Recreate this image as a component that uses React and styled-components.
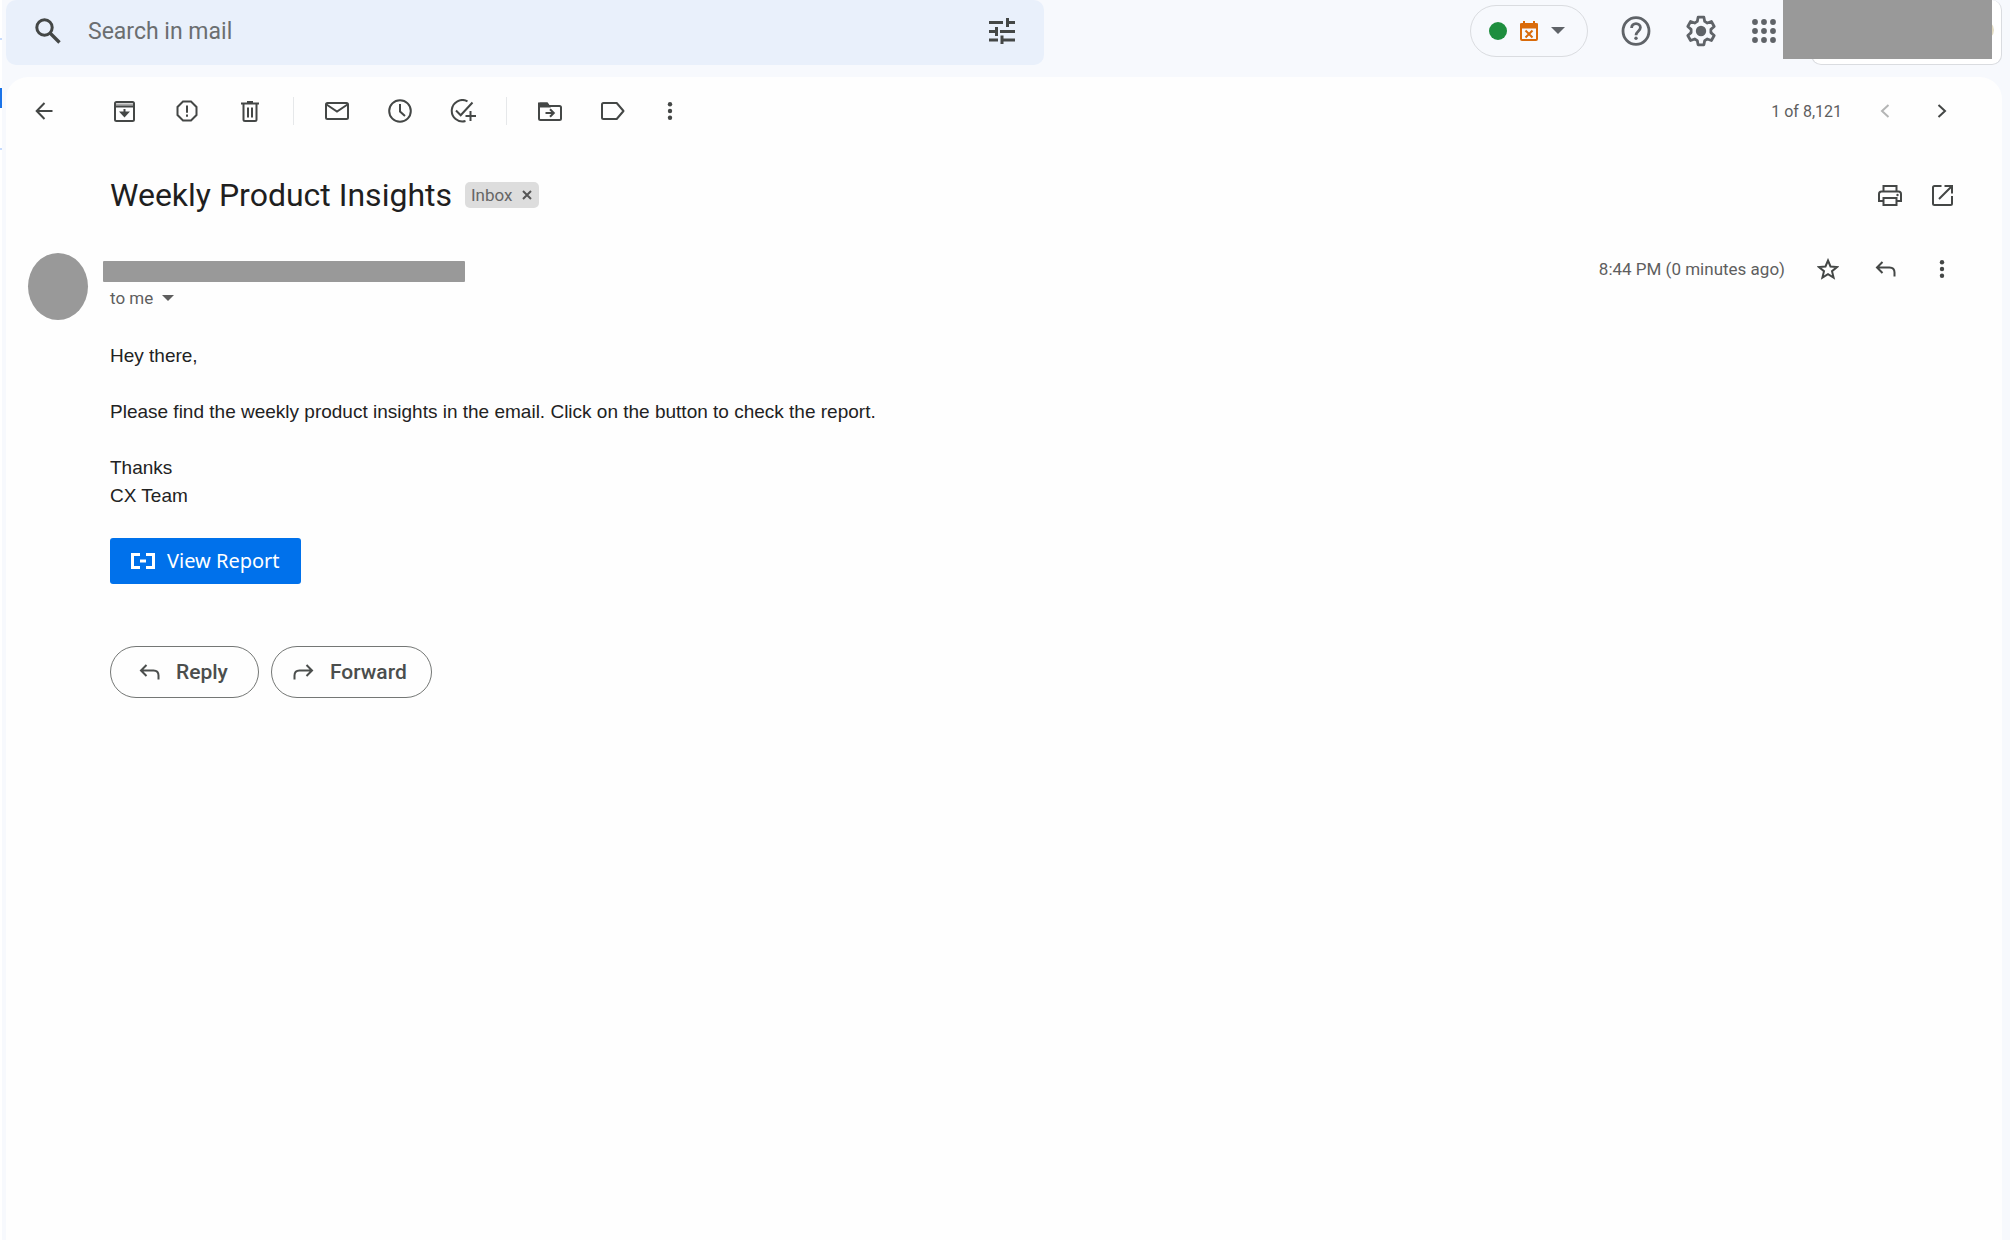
import React from 'react';
import styled, { createGlobalStyle } from 'styled-components';

const GlobalStyle = createGlobalStyle`
  * { box-sizing: border-box; }
  body { margin: 0; background: #f7f9fd; color: #444746; font-family: Roboto, "Liberation Sans", sans-serif; }
  button, input { font: inherit; color: inherit; }
  svg { display: block; flex: none; }
`;

const Shell = styled.div`
  display: flex;
  min-height: 100vh;
`;
const Rail = styled.div`
  flex: 0 0 2px;
  display: flex;
  flex-direction: column;
  background: #fff;
`;
const RailMark = styled.span`
  height: ${(p) => p.$size}px;
  margin-top: ${(p) => p.$space}px;
  background: ${(p) => (p.$strong ? '#1a73e8' : '#c6dafc')};
`;
const Main = styled.div`
  flex: 1;
  min-width: 0;
  display: flex;
  flex-direction: column;
  padding: 0 8px 0 4px;
`;
const Header = styled.header`
  display: flex;
  align-items: flex-start;
  justify-content: space-between;
  height: 77px;
`;
const SearchBar = styled.form`
  flex: 0 1 1038px;
  display: flex;
  align-items: center;
  height: 65px;
  padding: 0 20px 4px;
  border-radius: 10px;
  background: #e9f0fb;
`;
const SearchInput = styled.input`
  flex: 1;
  min-width: 0;
  height: 40px;
  margin-left: 18px;
  padding: 2px 0 0;
  border: 0;
  outline: 0;
  background: transparent;
  font-size: 23px;
  &::placeholder { color: #6b6e70; opacity: 1; }
`;
const IconButton = styled.button`
  flex: none;
  display: flex;
  align-items: center;
  justify-content: center;
  width: ${(p) => p.$width || 44}px;
  height: 44px;
  padding: 0;
  border: 0;
  border-radius: 22px;
  background: transparent;
  color: ${(p) => p.$tone || '#444746'};
  cursor: pointer;
`;
const HeaderTools = styled.div`
  display: flex;
  align-items: center;
  gap: 23px;
  height: 61px;
`;
const StatusButton = styled.button`
  display: flex;
  align-items: center;
  gap: 13px;
  height: 52px;
  padding: 0 22px 0 18px;
  margin-right: 4px;
  border: 1px solid #dadce0;
  border-radius: 26px;
  background: transparent;
  color: #5f6368;
`;
const StatusDot = styled.span`
  width: 18px;
  height: 18px;
  border-radius: 50%;
  background: #1e8e3e;
`;
const Account = styled.div`
  position: relative;
  align-self: flex-start;
  width: 219px;
  height: 65px;
  margin-left: -23px;
  padding-left: 28px;
`;
const AccountCard = styled.div`
  display: flex;
  justify-content: flex-end;
  align-items: center;
  height: 65px;
  padding: 0 7px 4px;
  border: 1px solid #dadce0;
  border-top: 0;
  border-radius: 10px;
  background: #fff;
`;
const AccountPhoto = styled.span`
  width: 20px;
  height: 20px;
  border-radius: 50%;
  background: #e3dcc3;
`;
const AccountMask = styled.div`
  position: absolute;
  top: 0;
  left: 0;
  width: 209px;
  height: 59px;
  background: #999;
`;
const Panel = styled.main`
  flex: 1;
  border-radius: 22px 22px 0 0;
  background: #fefefe;
`;
const Toolbar = styled.div`
  display: flex;
  align-items: center;
  height: 68px;
  padding: 0 38px 0 16px;
`;
const ToolGroup = styled.div`
  display: flex;
  align-items: center;
  gap: 19px;
  margin-left: ${(p) => p.$indent || 0}px;
`;
const Divider = styled.span`
  width: 1px;
  height: 28px;
  margin: 0 21px;
  background: #e6e8ea;
`;
const Pager = styled.div`
  display: flex;
  align-items: center;
  gap: 13px;
  margin-left: auto;
  font-size: 16px;
  color: #5e5e5e;
`;
const PagerCount = styled.span`
  margin-right: 8px;
`;
const SubjectRow = styled.div`
  display: flex;
  align-items: center;
  height: 100px;
  padding: 0 38px 0 104px;
`;
const Subject = styled.h1`
  margin: 0;
  font-size: 32px;
  line-height: 40px;
  font-weight: 400;
  color: #1f1f1f;
`;
const Chip = styled.span`
  display: flex;
  align-items: center;
  gap: 4px;
  height: 26px;
  margin-left: 13px;
  padding: 0 2px 0 6px;
  border-radius: 5px;
  background: #ddd;
  font-size: 17px;
  color: #666;
`;
const RowActions = styled.div`
  display: flex;
  align-items: center;
  gap: ${(p) => p.$gap}px;
  margin-left: auto;
`;
const Message = styled.article`
  display: grid;
  grid-template-columns: 104px 1fr;
`;
const Avatar = styled.div`
  width: 60px;
  height: 67px;
  margin: 8px 0 0 22px;
  border-radius: 50%;
  background: #999;
`;
const MessageHead = styled.div`
  display: flex;
  align-items: flex-start;
  height: 97px;
  padding: 2px 38px 0 0;
`;
const SenderBlock = styled.div`
  padding-top: 14px;
`;
const SenderMask = styled.div`
  width: 362px;
  height: 21px;
  margin-left: -7px;
  border-radius: 1px;
  background: #999;
`;
const Recipient = styled.button`
  display: flex;
  align-items: center;
  gap: 9px;
  height: 32px;
  padding: 0;
  border: 0;
  background: transparent;
  font-size: 17px;
  color: #5e5e5e;
`;
const Sent = styled.time`
  margin-right: 8px;
  font-size: 17px;
  color: #5e5e5e;
`;
const Body = styled.div`
  grid-column: 2;
  font-family: "Liberation Sans", Arial, sans-serif;
  font-size: 19px;
  line-height: 28px;
  color: #222;
`;
const Paragraph = styled.p`
  margin: 0 0 28px;
`;
const ReportLink = styled.a`
  display: inline-flex;
  align-items: center;
  gap: 12px;
  height: 46px;
  padding: 0 21px;
  border-radius: 3px;
  background: #0071eb;
  color: #fff;
  font-family: "Noto Sans", sans-serif;
  font-size: 20px;
  text-decoration: none;
`;
const ReplyRow = styled.div`
  grid-column: 2;
  display: flex;
  gap: 12px;
  margin-top: 62px;
`;
const PillButton = styled.button`
  display: flex;
  align-items: center;
  gap: 16px;
  height: 52px;
  padding: 0 ${(p) => p.$end}px 0 ${(p) => p.$start}px;
  border: 1px solid #747775;
  border-radius: 26px;
  background: transparent;
  font-size: 21px;
  font-weight: 500;
  color: #4b4e4d;
`;

/* Stroke icon drawn on a canvas of its own size in pixels */
const Icon = ({ w, h, sw = 2, children, ...rest }) => (
  <svg width={w} height={h} viewBox={`0 0 ${w} ${h}`} fill="none" stroke="currentColor" strokeWidth={sw} aria-hidden="true" {...rest}>
    {children}
  </svg>
);

const SearchIcon = () => (
  <Icon w={26} h={26} sw={3}><circle cx="9.5" cy="9.5" r="7.7" /><path d="M15 15l9.5 9.5" strokeWidth="3.4" /></Icon>
);
const TuneIcon = () => (
  <Icon w={26} h={26} sw={3}><path d="M0 4.5h14M18.5 0v9M18.5 4.5H26M0 13.5h7M7.5 9v9M11 13.5h15M0 22h9M13 17.5v9M13 22h13" /></Icon>
);
const Caret = ({ w = 12, h = 6 }) => (
  <Icon w={w} h={h}><path d={`M0 0H${w}L${w / 2} ${h}Z`} fill="currentColor" stroke="none" /></Icon>
);
const BusyIcon = () => (
  <Icon w={18} h={20} color="#d96b0b"><rect x="1" y="3" width="16" height="16" rx="1" /><path d="M0 5h18" strokeWidth="5" /><path d="M4 0v4M14 0v4M5.5 9.5l7 7M12.5 9.5l-7 7" /></Icon>
);
const HelpIcon = () => (
  <Icon w={30} h={30} sw={2.8}>
    <ellipse cx="15" cy="15" rx="13" ry="13.4" />
    <path d="M10.6 12c0-2.6 1.9-4.4 4.4-4.4s4.4 1.7 4.4 4c0 3.4-4.4 3.8-4.4 7.6" />
    <circle cx="15" cy="22.3" r="1.7" fill="currentColor" stroke="none" />
  </Icon>
);
const GearIcon = () => (
  <Icon w={30} h={32} sw={2.8}>
    <path strokeLinejoin="round" d="M12.1 2.2h5.8l.8 4.2 2.6 1.6 4.1-1.5 2.8 5-3.3 2.9v3.2l3.3 2.9-2.8 5-4.1-1.5-2.6 1.6-.8 4.2h-5.8l-.8-4.2L8.7 24l-4.1 1.5-2.8-5 3.3-2.9v-3.2L1.8 11.5l2.800-5L8.7 8l2.6-1.6z" />
    <circle cx="15" cy="16" r="5.2" fill="currentColor" stroke="none" />
  </Icon>
);
const AppsIcon = () => (
  <Icon w={24} h={24}>
    {[3, 12, 21].flatMap((y) => [3, 12, 21].map((x) => <circle key={`${x}-${y}`} cx={x} cy={y} r="2.9" fill="currentColor" stroke="none" />))}
  </Icon>
);
const BackIcon = () => <Icon w={18} h={18}><path d="M17.5 9H2M9.5 1L1.7 9l7.8 8" /></Icon>;
const ArchiveIcon = () => (
  <Icon w={21} h={21}><rect x="1" y="1" width="19" height="19" rx="1.5" /><path d="M2 3.5h17" stroke="#aaa" /><path d="M1 5.5h19M10.5 8v7" /><path d="M7.3 11.5l3.2 3.5 3.2-3.5z" fill="currentColor" /></Icon>
);
const SpamIcon = () => (
  <Icon w={22} h={22}><path d="M7 1.5h8L20.5 7v8L15 20.5H7L1.5 15V7zM11 5.5v7.3M11 14.5v2.2" /></Icon>
);
const TrashIcon = () => (
  <Icon w={18} h={21}><path d="M0 2.5h18M6 1h6M2.5 3v15.5q0 1.5 1.5 1.5h10q1.5 0 1.5-1.5V3M7 6.5v10M11 6.5v10" /></Icon>
);
const MailIcon = () => (
  <Icon w={24} h={18}><rect x="1" y="1" width="22" height="16" rx="1.5" /><path d="M1.5 2.5L12 9.5l10.5-7" /></Icon>
);
const ClockIcon = () => (
  <Icon w={24} h={24}><circle cx="12" cy="12" r="10.8" /><path d="M12 5v7.500l5 4.500" /></Icon>
);
const TaskIcon = () => (
  <Icon w={26} h={24}><path d="M17.5 2.3A10.7 10.7 0 1 0 15.5 22M6 11.5l4.7 4.7L22.5 3.5M20.5 12v10M15.5 17H26" /></Icon>
);
const MoveIcon = () => (
  <Icon w={24} h={19}><path d="M1 3v13.5q0 1.500 1.500 1.500h19q1.500 0 1.500-1.500v-11Q23 4 21.500 4H11L9 1.500H2.500Q1 1.500 1 3z" /><path d="M1 1.500h8l2 3H1z" fill="currentColor" /><path d="M7.500 11h8M12 7.200l3.800 3.800L12 14.800" /></Icon>
);
const LabelIcon = () => (
  <Icon w={24} h={18}><path strokeLinejoin="round" d="M2.5 1h13.2L22.500 9l-6.800 8H2.500Q1 17 1 15.500v-13Q1 1 2.500 1z" /></Icon>
);
const MoreIcon = () => (
  <Icon w={6} h={18}>{[2.3, 9, 15.7].map((y) => <circle key={y} cx="3" cy={y} r="2.2" fill="currentColor" stroke="none" />)}</Icon>
);
const Chevron = ({ flip }) => (
  <Icon w={10} h={14}><path d={flip ? 'M8.5 1L2 7l6.5 6' : 'M1.5 1L8 7l-6.5 6'} /></Icon>
);
const CloseIcon = () => <Icon w={10} h={10}><path d="M1 1l8 8M9 1L1 9" /></Icon>;
const PrintIcon = () => (
  <Icon w={24} h={21}><path d="M5.5 6V1h13v5M5.5 16H1V9q0-2.500 2.500-2.500h17Q23 6.500 23 9v7h-4.500" /><rect x="5.5" y="13" width="13" height="7" /><circle cx="19.5" cy="10" r="1.2" fill="currentColor" stroke="none" /></Icon>
);
const OpenIcon = () => (
  <Icon w={21} h={21}><path d="M9.5 1H2.500Q1 1 1 2.500v16Q1 20 2.500 20h16q1.500 0 1.500-1.500V11M12.500 1H20v7.500M19.500 1.500L7 14" /></Icon>
);
const StarIcon = () => (
  <Icon w={22} h={22}><path d="M11 2.500l2.500 6 6.500.5-5 4.200 1.600 6.400L11 16.200l-5.600 3.400L7 13.200 2 9l6.500-.5z" /></Icon>
);
const ReplyIcon = ({ forward }) => (
  <Icon w={21} h={16} transform={forward ? 'scale(-1 1)' : undefined}><path d="M7.5 1L2 6.500 7.500 12M2 6.500h12.500q5 0 5 5V15.500" /></Icon>
);
const ReportIcon = () => (
  <Icon w={24} h={16} sw={3}><path d="M9 1.5H1.5v13H9M15 1.5h7.5v13H15M9 8h6" /></Icon>
);

const tools = [
  [['Archive', ArchiveIcon], ['Report spam', SpamIcon], ['Delete', TrashIcon]],
  [['Mark as unread', MailIcon], ['Snooze', ClockIcon], ['Add to tasks', TaskIcon]],
  [['Move to', MoveIcon], ['Labels', LabelIcon], ['More', MoreIcon, 32]],
];

export default function App() {
  return (
    <>
      <GlobalStyle />
      <Shell>
        <Rail>
          <RailMark $space={38} $size={2} />
          <RailMark $space={48} $size={20} $strong />
          <RailMark $space={40} $size={2} />
        </Rail>
        <Main>
          <Header>
            <SearchBar role="search" onSubmit={(e) => e.preventDefault()}>
              <IconButton type="submit" aria-label="Search"><SearchIcon /></IconButton>
              <SearchInput type="text" placeholder="Search in mail" aria-label="Search in mail" />
              <IconButton type="button" aria-label="Show search options"><TuneIcon /></IconButton>
            </SearchBar>
            <HeaderTools>
              <StatusButton aria-label="Status">
                <StatusDot /><BusyIcon /><Caret w={14} h={7} />
              </StatusButton>
              <IconButton $width={42} $tone="#5f6368" aria-label="Support"><HelpIcon /></IconButton>
              <IconButton $width={42} $tone="#5f6368" aria-label="Settings"><GearIcon /></IconButton>
              <IconButton $width={38} $tone="#5f6368" aria-label="Apps"><AppsIcon /></IconButton>
              <Account>
                <AccountCard><AccountPhoto /></AccountCard>
                <AccountMask />
              </Account>
            </HeaderTools>
          </Header>
          <Panel>
            <Toolbar>
              <IconButton aria-label="Back to Inbox"><BackIcon /></IconButton>
              {tools.map((group, i) => (
                <React.Fragment key={i}>
                  {i > 0 && <Divider />}
                  <ToolGroup $indent={i === 0 ? 36 : 0}>
                    {group.map(([label, Glyph, width]) => (
                      <IconButton key={label} $width={width} aria-label={label}><Glyph /></IconButton>
                    ))}
                  </ToolGroup>
                </React.Fragment>
              ))}
              <Pager>
                <PagerCount>1 of 8,121</PagerCount>
                <IconButton $tone="#b4b5b5" aria-label="Newer"><Chevron flip /></IconButton>
                <IconButton aria-label="Older"><Chevron /></IconButton>
              </Pager>
            </Toolbar>
            <SubjectRow>
              <Subject>Weekly Product Insights</Subject>
              <Chip>
                Inbox
                <IconButton $width={20} aria-label="Remove label Inbox" $tone="#555"><CloseIcon /></IconButton>
              </Chip>
              <RowActions $gap={8}>
                <IconButton aria-label="Print all"><PrintIcon /></IconButton>
                <IconButton aria-label="In new window"><OpenIcon /></IconButton>
              </RowActions>
            </SubjectRow>
            <Message>
              <Avatar />
              <MessageHead>
                <SenderBlock>
                  <SenderMask />
                  <Recipient>to me <Caret /></Recipient>
                </SenderBlock>
                <RowActions $gap={13}>
                  <Sent>8:44 PM (0 minutes ago)</Sent>
                  <IconButton aria-label="Star"><StarIcon /></IconButton>
                  <IconButton aria-label="Reply"><ReplyIcon /></IconButton>
                  <IconButton aria-label="More"><MoreIcon /></IconButton>
                </RowActions>
              </MessageHead>
              <Body>
                <Paragraph>Hey there,</Paragraph>
                <Paragraph>Please find the weekly product insights in the email. Click on the button to check the report.</Paragraph>
                <Paragraph>Thanks<br />CX Team</Paragraph>
                <ReportLink href="#report"><ReportIcon />View Report</ReportLink>
              </Body>
              <ReplyRow>
                <PillButton $start={28} $end={30}><ReplyIcon />Reply</PillButton>
                <PillButton $start={21} $end={24}><ReplyIcon forward />Forward</PillButton>
              </ReplyRow>
            </Message>
          </Panel>
        </Main>
      </Shell>
    </>
  );
}
